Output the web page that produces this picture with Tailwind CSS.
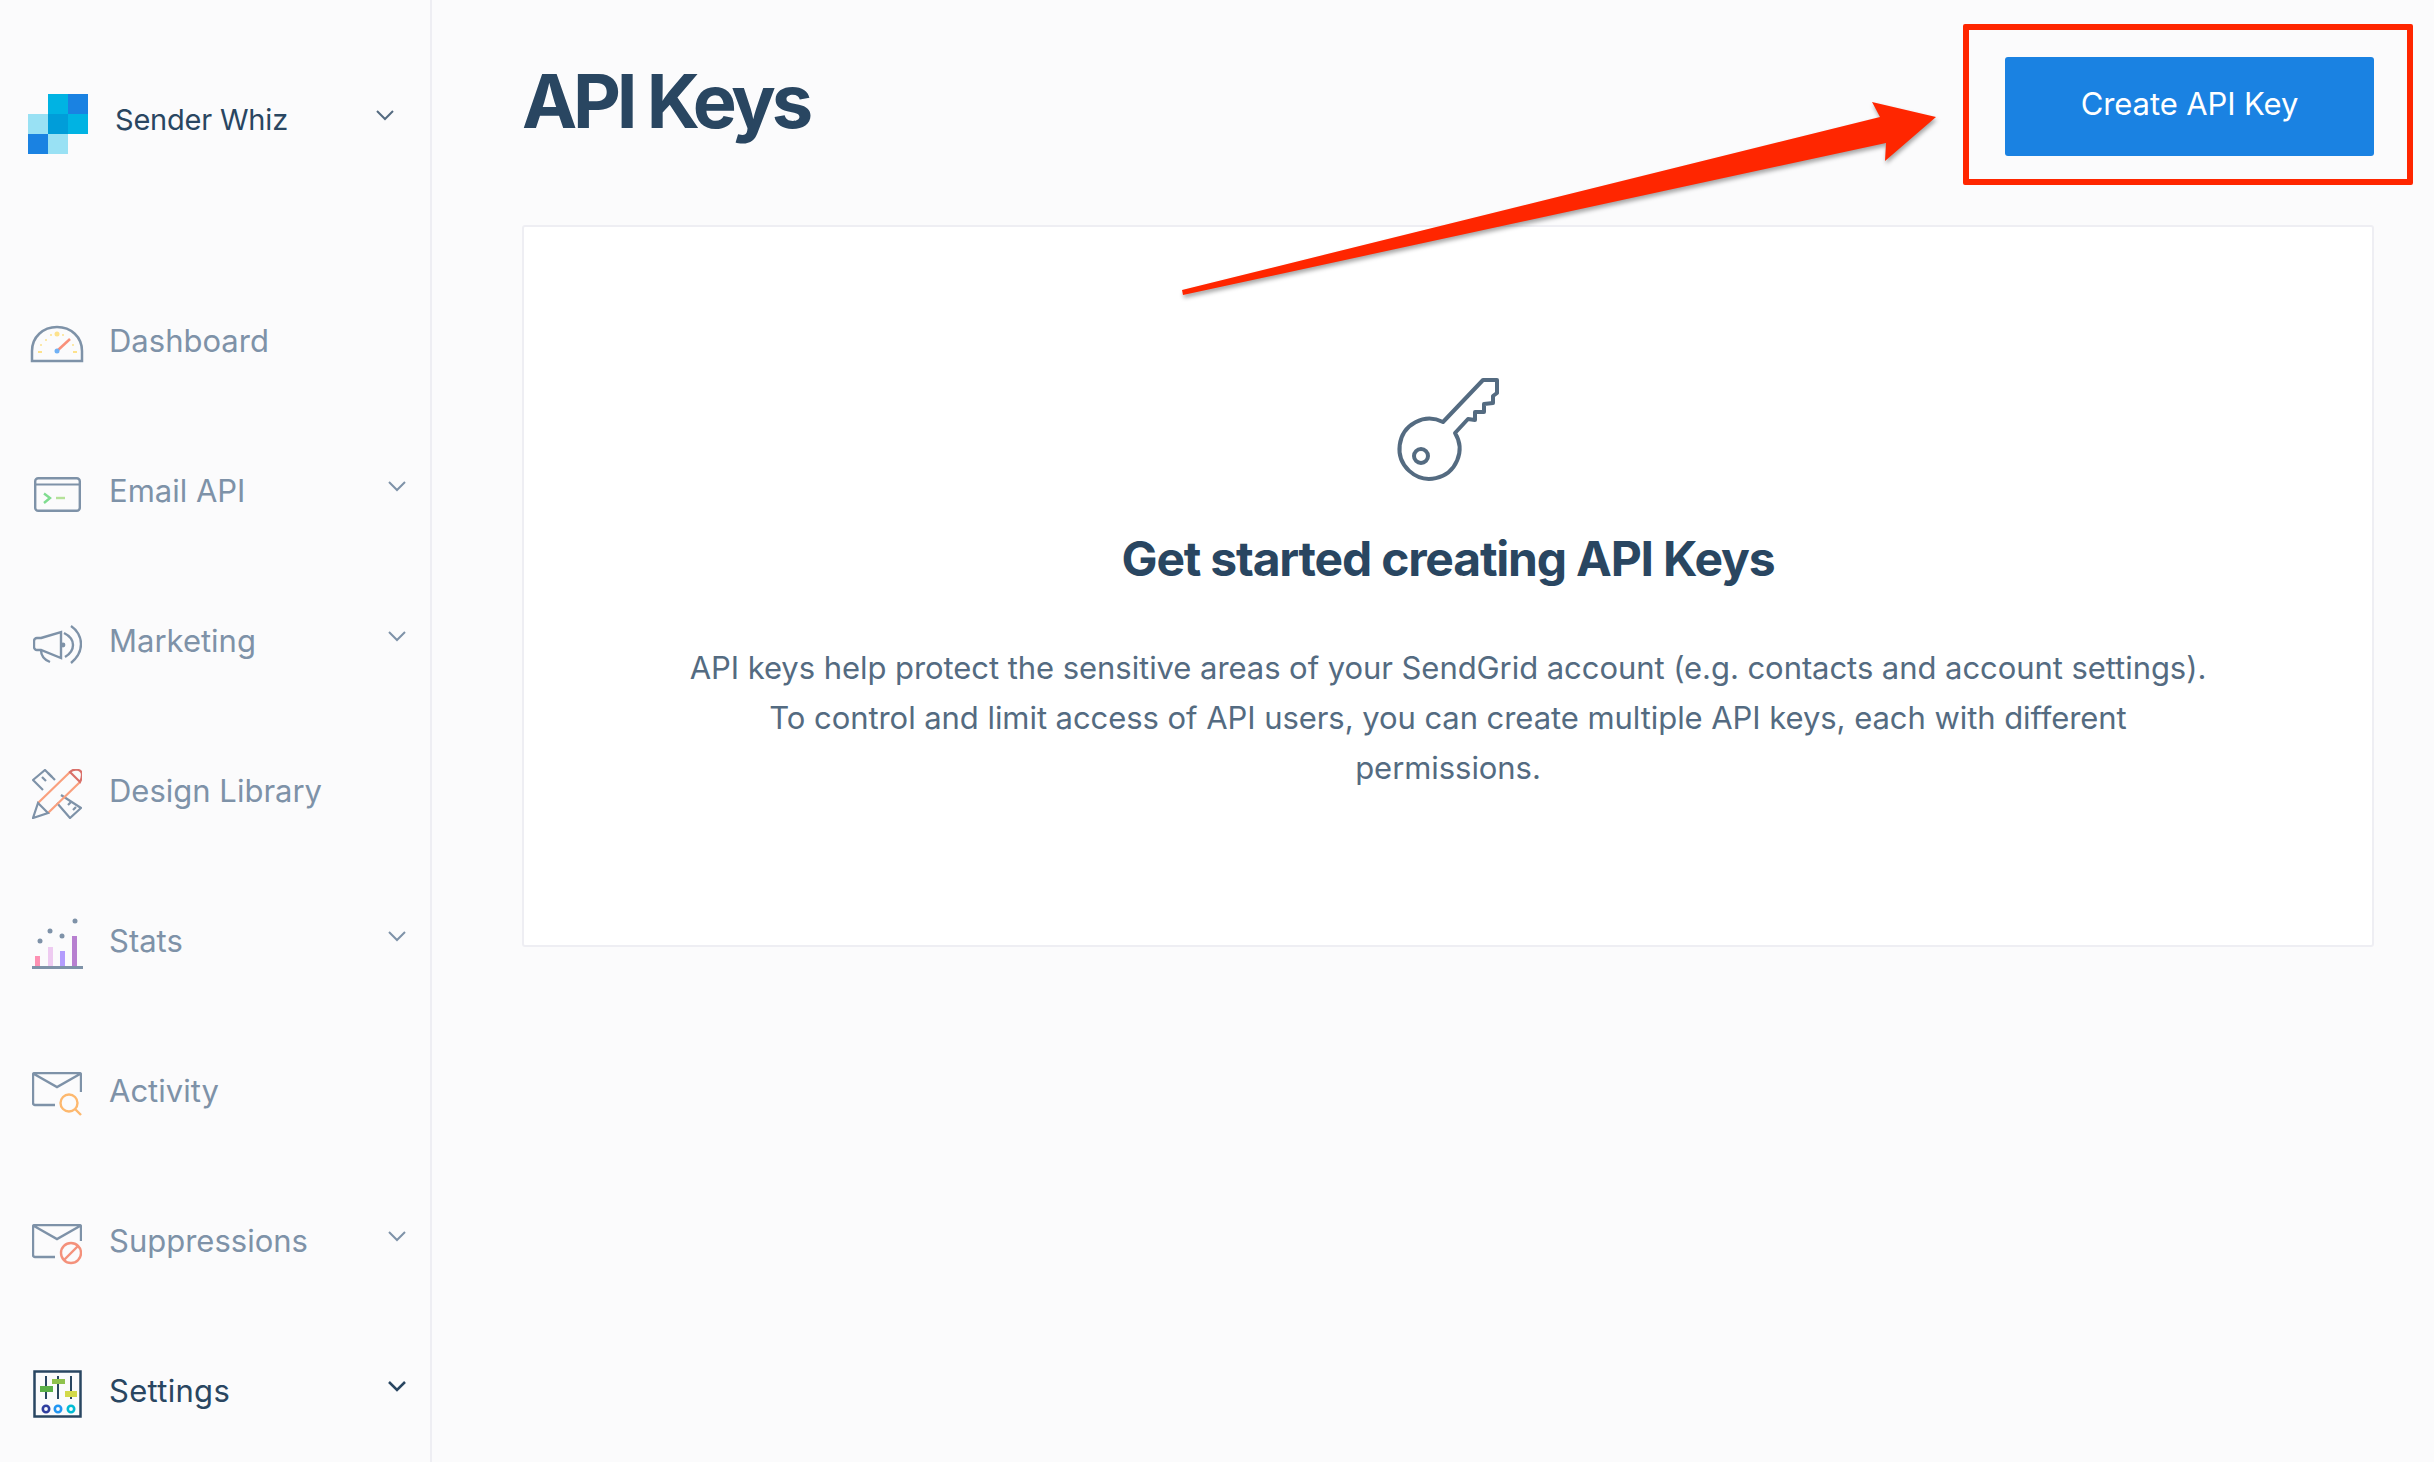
<!DOCTYPE html>
<html lang="en">
<head>
    <meta charset="UTF-8">
    <title>API Keys</title>
    <script src="https://cdn.jsdelivr.net/npm/@tailwindcss/browser@4"></script>
</head>
<body class="bg-[#fbfbfc] font-['Inter',sans-serif] overflow-hidden">
<div class="relative flex h-[1462px] w-[2434px]">

    <!-- sidebar -->
    <aside class="w-[432px] shrink-0 border-r-2 border-[#eeeef3] flex flex-col">
        <div class="h-[266px] shrink-0 pt-[94px] pl-[28px] pr-[36px]">
            <div class="flex items-start h-[60px]">
                <svg class="w-[60px] h-[60px]" viewBox="0 0 60 60">
                    <rect x="20" y="0" width="20" height="20" fill="#00b3e3"/>
                    <rect x="40" y="0" width="20" height="20" fill="#1a82e2"/>
                    <rect x="0" y="20" width="20" height="20" fill="#99e1f4"/>
                    <rect x="20" y="20" width="20" height="20" fill="#009dd9"/>
                    <rect x="40" y="20" width="20" height="20" fill="#00b3e3"/>
                    <rect x="0" y="40" width="20" height="20" fill="#1a82e2"/>
                    <rect x="20" y="40" width="20" height="20" fill="#99e1f4"/>
                </svg>
                <span class="ml-[27px] text-[29px] leading-[52px] tracking-[-0.2px] text-[#294661]">Sender Whiz</span>
                <svg class="ml-auto w-[18px] h-[12px] mt-[15px]" viewBox="0 0 18 12" fill="none" stroke="#546b81" stroke-width="2"><path d="M1 2l8 8 8-8"/></svg>
            </div>
        </div>

        <nav class="flex flex-col text-[31px] text-[#7e92a8]">
            <a class="flex items-center h-[150px] pl-[27px] pr-[24px]">
                <span class="w-[60px] mt-[6px] flex justify-center">
                    <svg class="w-[54px] h-[38px]" viewBox="0 0 54 38" fill="none">
                        <path d="M2 36V26C2 12 13 2 27 2s25 10 25 24v10z" stroke="#7e92a8" stroke-width="2.5"/>
                        <path d="M27 26L40 14" stroke="#f9907a" stroke-width="2.5"/>
                        <circle cx="27" cy="26" r="2.5" fill="#6fb1f5"/>
                        <circle cx="27" cy="9" r="2.5" fill="#fde28c"/>
                        <circle cx="21" cy="10" r="1" fill="#fde28c"/>
                        <circle cx="33" cy="10" r="1" fill="#fde28c"/>
                        <circle cx="16" cy="15" r="1" fill="#fde28c"/>
                        <circle cx="11" cy="20" r="1" fill="#fde28c"/>
                        <circle cx="43" cy="20" r="1" fill="#fde28c"/>
                        <path d="M8 27h4M43 27h4" stroke="#fde28c" stroke-width="2"/>
                    </svg>
                </span>
                <span class="ml-[22px]">Dashboard</span>
            </a>
            <a class="flex items-center h-[150px] pl-[27px] pr-[24px]">
                <span class="w-[60px] mt-[6px] flex justify-center">
                    <svg class="w-[47px] h-[35px]" viewBox="0 0 47 35" fill="none">
                        <rect x="1.2" y="1.2" width="44.6" height="32.6" rx="3" stroke="#7e92a8" stroke-width="2.4"/>
                        <path d="M2 7.5h43" stroke="#7e92a8" stroke-width="2"/>
                        <path d="M10 16.5l6 4.5-6 5" stroke="#7fdc8f" stroke-width="2.4"/>
                        <path d="M22 21h9" stroke="#b5e29a" stroke-width="2.4"/>
                    </svg>
                </span>
                <span class="ml-[22px]">Email API</span>
                <svg class="ml-auto w-[18px] h-[12px] -mt-[10px]" viewBox="0 0 18 12" fill="none" stroke="#7e92a8" stroke-width="2"><path d="M1 2l8 8 8-8"/></svg>
            </a>
            <a class="flex items-center h-[150px] pl-[27px] pr-[24px]">
                <span class="w-[60px] mt-[6px] flex justify-center">
                    <svg class="w-[49px] h-[39px]" viewBox="0 0 49 39" fill="none" stroke="#7e92a8" stroke-width="2.4">
                        <path d="M8 13l20-6v26L8 25H4a3 3 0 0 1-3-3v-6a3 3 0 0 1 3-3z"/>
                        <path d="M8 25c0 6 4 10 9 12"/>
                        <path d="M31 8c6 3 9 8 9 12s-3 9-8 12"/>
                        <path d="M38 1c6 4 10 11 10 18s-4 14-10 19"/>
                        <circle cx="30" cy="20" r="2.4" fill="#7e92a8" stroke="none"/>
                    </svg>
                </span>
                <span class="ml-[22px]">Marketing</span>
                <svg class="ml-auto w-[18px] h-[12px] -mt-[10px]" viewBox="0 0 18 12" fill="none" stroke="#7e92a8" stroke-width="2"><path d="M1 2l8 8 8-8"/></svg>
            </a>
            <a class="flex items-center h-[150px] pl-[27px] pr-[24px]">
                <span class="w-[60px] mt-[6px] flex justify-center">
                    <svg class="w-[50px] h-[50px]" viewBox="0 0 50 50" fill="none" stroke-width="2.2">
                        <path d="M11 21L1 11 13 1l10 10M29 26l20 13-11 10-13-15" stroke="#7e92a8"/>
                        <path d="M10 8l4 4M16 4l4 4M36 36l3-3M41 41l3-3" stroke="#7e92a8"/>
                        <path d="M6 34L38 3M16 44L48 13" stroke="#f9a07e"/>
                        <path d="M38 3c4-4 12-3 12 3 0 3-1 5-2 7z" stroke="#d9706a"/>
                        <path d="M6 34L1 49l15-5z" stroke="#7e92a8"/>
                    </svg>
                </span>
                <span class="ml-[22px]">Design Library</span>
            </a>
            <a class="flex items-center h-[150px] pl-[27px] pr-[24px]">
                <span class="w-[60px] mt-[6px] flex justify-center">
                    <svg class="w-[52px] h-[52px]" viewBox="0 0 52 52" fill="none">
                        <rect x="4" y="38" width="5" height="10" fill="#fd91b3"/>
                        <rect x="17" y="29" width="5" height="19" fill="#eecbf1"/>
                        <rect x="29" y="33" width="5" height="15" fill="#b39cfd"/>
                        <rect x="41" y="18" width="5" height="30" fill="#b77fd0"/>
                        <rect x="1" y="48" width="51" height="3" fill="#7e92a8"/>
                        <circle cx="9" cy="23" r="2.5" fill="#7e92a8"/>
                        <circle cx="19" cy="13" r="2.5" fill="#7e92a8"/>
                        <circle cx="31" cy="18" r="2.5" fill="#7e92a8"/>
                        <circle cx="44" cy="3" r="2.5" fill="#7e92a8"/>
                    </svg>
                </span>
                <span class="ml-[22px]">Stats</span>
                <svg class="ml-auto w-[18px] h-[12px] -mt-[10px]" viewBox="0 0 18 12" fill="none" stroke="#7e92a8" stroke-width="2"><path d="M1 2l8 8 8-8"/></svg>
            </a>
            <a class="flex items-center h-[150px] pl-[27px] pr-[24px]">
                <span class="w-[60px] mt-[6px] flex justify-center">
                    <svg class="w-[50px] h-[44px]" viewBox="0 0 50 44" fill="none" stroke-width="2.4">
                        <path d="M23 33H3a2 2 0 0 1-2-2V3a2 2 0 0 1 2-2h44a2 2 0 0 1 2 2v17M2 2l23 13L48 2" stroke="#7e92a8"/>
                        <circle cx="37" cy="31" r="8.5" stroke="#fdb86e"/>
                        <path d="M43 37l6 6" stroke="#fdb86e"/>
                    </svg>
                </span>
                <span class="ml-[22px]">Activity</span>
            </a>
            <a class="flex items-center h-[150px] pl-[27px] pr-[24px]">
                <span class="w-[60px] mt-[6px] flex justify-center">
                    <svg class="w-[50px] h-[41px]" viewBox="0 0 50 41" fill="none" stroke-width="2.4">
                        <path d="M23 33H3a2 2 0 0 1-2-2V3a2 2 0 0 1 2-2h44a2 2 0 0 1 2 2v14M2 2l23 13L48 2" stroke="#7e92a8"/>
                        <circle cx="39" cy="29" r="10" stroke="#f4917b"/>
                        <path d="M46 22L32 36" stroke="#f4917b"/>
                    </svg>
                </span>
                <span class="ml-[22px]">Suppressions</span>
                <svg class="ml-auto w-[18px] h-[12px] -mt-[10px]" viewBox="0 0 18 12" fill="none" stroke="#7e92a8" stroke-width="2"><path d="M1 2l8 8 8-8"/></svg>
            </a>
            <a class="flex items-center h-[150px] pl-[27px] pr-[24px] text-[#294661]">
                <span class="w-[60px] mt-[6px] flex justify-center">
                    <svg class="w-[49px] h-[48px]" viewBox="0 0 49 48" fill="none">
                        <rect x="1.5" y="1.5" width="46" height="45" stroke="#294661" stroke-width="2.5"/>
                        <path d="M13 6v23M25 6v23M38 6v23" stroke="#294661" stroke-width="2"/>
                        <rect x="7" y="16" width="13" height="6" fill="#5bb048"/>
                        <rect x="19" y="9" width="13" height="5" fill="#8fc24d"/>
                        <rect x="32" y="21" width="12" height="6" fill="#d3d94a"/>
                        <circle cx="13" cy="39" r="3.2" stroke="#303f9f" stroke-width="2.6"/>
                        <circle cx="25" cy="39" r="3.2" stroke="#2196f3" stroke-width="2.6"/>
                        <circle cx="38" cy="39" r="3.2" stroke="#00bcd4" stroke-width="2.6"/>
                    </svg>
                </span>
                <span class="ml-[22px] tracking-[0.3px]">Settings</span>
                <svg class="ml-auto w-[18px] h-[12px] -mt-[10px]" viewBox="0 0 18 12" fill="none" stroke="#294661" stroke-width="2.5"><path d="M1 2l8 8 8-8"/></svg>
            </a>
        </nav>
    </aside>

    <!-- main -->
    <main class="flex-1 pl-[90px] pr-[60px]">
        <header class="flex items-start justify-between h-[225px]">
            <h1 class="mt-[46px] text-[74px] leading-[111px] font-bold tracking-[-4.2px] text-[#294661]">API Keys</h1>
            <button class="mt-[57px] w-[369px] h-[99px] pb-[5px] bg-[#1a82e2] rounded-[3px] text-white text-[31px] tracking-[-0.1px]">Create API Key</button>
        </header>
        <section class="h-[722px] bg-white border-2 border-[#eeeef3] rounded-[3px] flex flex-col items-center pt-[151px]">
            <svg class="w-[100px] h-[100px] overflow-visible" viewBox="0 0 100 100" fill="none" stroke="#546b81" stroke-width="4" stroke-linejoin="round">
                <path d="M45 44L85 2H99V15L95 18V25L86 26V34H77V42L70 41L57 55A30 30 0 1 1 45 44z"/>
                <circle cx="23" cy="78" r="7"/>
            </svg>
            <h2 class="mt-[45px] text-[48px] leading-[72px] font-bold tracking-[-1.2px] text-[#294661]">Get started creating API Keys</h2>
            <p class="mt-[48px] max-w-[1540px] text-center text-[31px] leading-[50px] tracking-[-0.06px] text-[#546b81]">API keys help protect the sensitive areas of your SendGrid account (e.g. contacts and account settings). To control and limit access of API users, you can create multiple API keys, each with different permissions.</p>
        </section>
    </main>

    <!-- annotation box and arrow drawn over the page -->
    <div class="absolute left-[1963px] top-[24px] w-[450px] h-[161px] border-[6px] border-[#ff2600] rounded-[2px]"></div>
    <svg class="absolute left-0 top-0 w-[2434px] h-[1462px] pointer-events-none drop-shadow-[1px_3px_2px_rgba(0,0,0,0.35)]" viewBox="0 0 2434 1462">
        <path d="M1182 290L1880 117L1872 102L1936 117L1885 161L1886 143L1183 295z" fill="#ff2600"/>
    </svg>
</div>
</body>
</html>
